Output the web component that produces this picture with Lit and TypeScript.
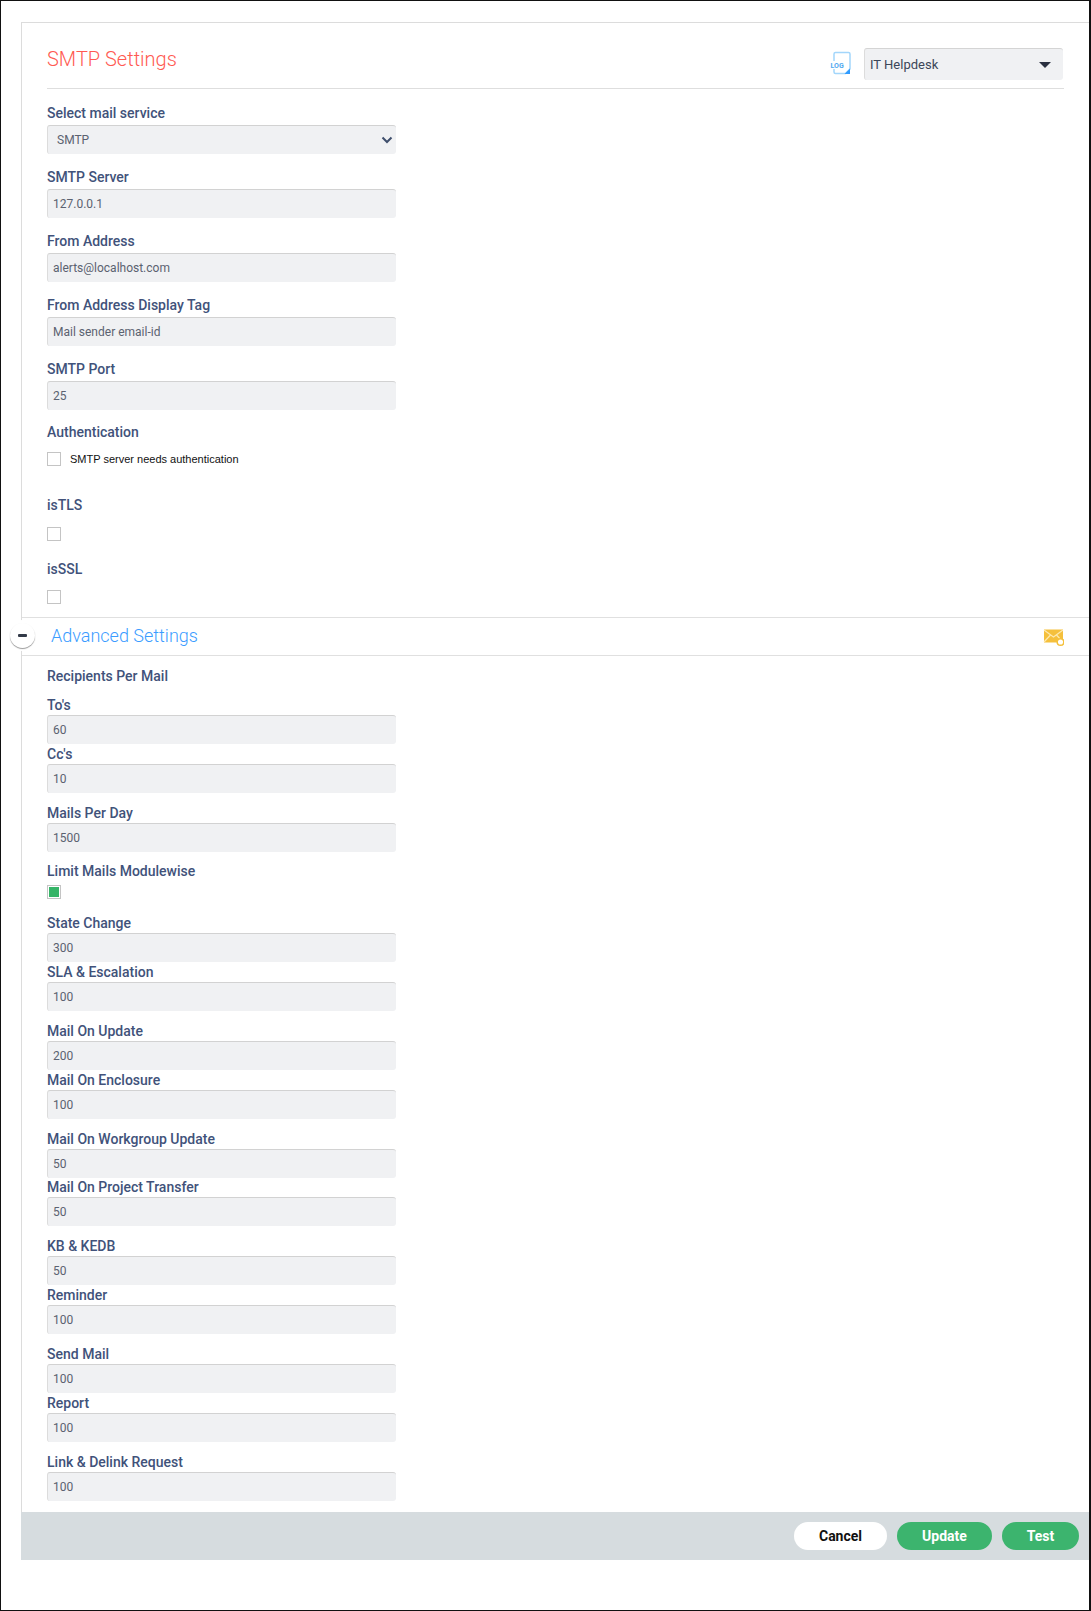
import { LitElement, html, css } from "lit";
import { customElement } from "lit/decorators.js";

type F = { label: string; value: string; cls?: string };

const mainFields: F[] = [
  { label: "SMTP Server", value: "127.0.0.1" },
  { label: "From Address", value: "alerts@localhost.com" },
  { label: "From Address Display Tag", value: "Mail sender email-id" },
  { label: "SMTP Port", value: "25" },
];

const limitGroups: F[][] = [
  [
    { label: "State Change", value: "300" },
    { label: "SLA & Escalation", value: "100" },
  ],
  [
    { label: "Mail On Update", value: "200" },
    { label: "Mail On Enclosure", value: "100" },
  ],
  [
    { label: "Mail On Workgroup Update", value: "50" },
    { label: "Mail On Project Transfer", value: "50", cls: "pull" },
  ],
  [
    { label: "KB & KEDB", value: "50" },
    { label: "Reminder", value: "100" },
  ],
  [
    { label: "Send Mail", value: "100" },
    { label: "Report", value: "100" },
  ],
  [{ label: "Link & Delink Request", value: "100" }],
];

@customElement("app-root")
export class AppRoot extends LitElement {
  static styles = css`
    :host {
      display: block;
      box-sizing: border-box;
      width: 1091px;
      height: 1611px;
      background: #fff;
      border: solid #111;
      border-width: 1px 2px 1px 1px;
      font-family: Roboto, "Liberation Sans", sans-serif;
      overflow: hidden;
    }
    .panel {
      position: relative;
      margin: 21px 0 0 20px;
      border-top: 1px solid #dcdcdc;
      border-left: 1px solid #dcdcdc;
    }
    .head {
      display: flex;
      align-items: center;
      justify-content: space-between;
      margin: 0 25px;
      height: 65px;
      border-bottom: 1px solid #dedede;
    }
    h1 {
      margin: 7px 0 0;
      font-size: 20px;
      font-weight: 300;
      color: #ff5a52;
    }
    .head-right {
      display: flex;
      align-items: center;
      gap: 13px;
      margin: 17px 1px 0 0;
    }
    .log { display: block; width: 24px; height: 26px; }
    .log text {
      font-family: Roboto, sans-serif;
      font-size: 7px;
      font-weight: 700;
      fill: #4fa8f0;
    }
    .dept {
      box-sizing: border-box;
      width: 199px;
      height: 32px;
      display: flex;
      align-items: center;
      justify-content: space-between;
      padding: 0 12px 0 5px;
      background: #f0f1f3;
      border-top: 1px solid #d4d4d4;
      border-left: 1px solid #dcdcdc;
      border-radius: 3px;
      font-size: 13px;
      color: #3c4658;
    }
    .caret {
      width: 0;
      height: 0;
      border-left: 6px solid transparent;
      border-right: 6px solid transparent;
      border-top: 6px solid #2a3040;
    }
    .body { padding: 13px 25px 0; }
    .label {
      height: 20px;
      line-height: 20px;
      font-size: 14px;
      font-weight: 500;
      color: #41527a;
    }
    .stack { display: flex; flex-direction: column; gap: 12px; }
    .stack .label { margin-bottom: 3px; line-height: 22px; }
    .pull { margin-top: -1px; }
    .input {
      box-sizing: border-box;
      width: 349px;
      height: 29px;
      line-height: 28px;
      padding-left: 5px;
      background: #f0f1f3;
      border-top: 1px solid #d2d2d2;
      border-left: 1px solid #dcdcdc;
      border-radius: 3px;
      font-size: 12px;
      color: #5b6270;
    }
    .select {
      display: flex;
      align-items: center;
      justify-content: space-between;
      padding: 0 3px 0 9px;
    }
    .chev { display: block; width: 12px; height: 8px; }
    .box {
      box-sizing: border-box;
      width: 14px;
      height: 14px;
      background: #fff;
      border: 1px solid #c4c4c4;
      padding: 1px;
    }
    .box.on::before {
      content: "";
      display: block;
      width: 10px;
      height: 10px;
      background: #35b467;
    }
    .auth { margin-top: 11px; line-height: 22px; }
    .check-row { display: flex; align-items: center; gap: 9px; margin-top: 11px; }
    .check-text {
      font-family: "Liberation Sans", Arial, sans-serif;
      font-size: 11px;
      color: #111;
    }
    .tls { margin-top: 29px; }
    .tls .box { margin-top: 12px; }
    .ssl { margin-top: 18px; }
    .ssl .box { margin-top: 11px; }
    .adv-wrap { position: relative; margin-top: 13px; }
    .adv-head {
      display: flex;
      align-items: center;
      justify-content: space-between;
      box-sizing: border-box;
      height: 39px;
      padding: 0 25px 0 29px;
      border-top: 1px solid #e0e0e0;
      border-bottom: 1px solid #e0e0e0;
    }
    h2 {
      margin: 0 0 2px;
      font-size: 18px;
      font-weight: 300;
      color: #3b9cff;
    }
    .mail { display: block; width: 22px; height: 20px; }
    .toggle {
      position: absolute;
      left: -12px;
      top: 6px;
      width: 25px;
      height: 25px;
      border-radius: 50%;
      background: #fff;
      box-shadow: 0 1px 1px rgba(0, 0, 0, 0.4), 0 0 0 3px #fff;
      display: flex;
      align-items: center;
      justify-content: center;
    }
    .toggle::before {
      content: "";
      width: 9px;
      height: 3px;
      background: #333a48;
      border-radius: 1px;
    }
    .adv { padding: 10px 25px 11px; }
    .to { margin-top: 9px; }
    .group { margin-top: 10px; }
    .limit { margin-top: 9px; }
    .limit .box { margin-top: 4px; }
    .groups-first { margin-top: 14px; }
    .footer {
      display: flex;
      justify-content: flex-end;
      align-items: center;
      gap: 10px;
      height: 48px;
      margin-left: -1px;
      padding-right: 10px;
      background: #d6dcdf;
    }
    .btn {
      height: 28px;
      line-height: 28px;
      text-align: center;
      border-radius: 14px;
      font-size: 14px;
      font-weight: 700;
      color: #fff;
      background: #3cb46e;
    }
    .cancel { width: 93px; background: #fff; color: #111; }
    .update { width: 95px; }
    .test { width: 77px; }
  `;

  private field(f: F) {
    return html`<div class="field ${f.cls ?? ""}">
      <div class="label">${f.label}</div>
      <div class="input">${f.value}</div>
    </div>`;
  }

  render() {
    return html`
      <div class="panel">
        <div class="head">
          <h1>SMTP Settings</h1>
          <div class="head-right">
            <svg class="log" viewBox="0 0 24 26">
              <path d="M8.500 1.500h13a1.500 1.500 0 0 1 1.500 1.500v15l-4.500 4.500H8.500A1.500 1.500 0 0 1 7 21V3a1.500 1.500 0 0 1 1.500-1.500z" fill="#fff" stroke="#a3d6fb" stroke-width="1.500"/>
              <path d="M23 17.500v5.500h-5.500z" fill="#2f9bff"/>
              <rect x="3" y="10" width="15" height="8" fill="#fff"/>
              <text x="3.500" y="16.500">LOG</text>
            </svg>
            <div class="dept"><span>IT Helpdesk</span><span class="caret"></span></div>
          </div>
        </div>
        <div class="body">
          <div class="stack">
            <div class="field">
              <div class="label">Select mail service</div>
              <div class="input select">
                <span>SMTP</span>
                <svg class="chev" viewBox="0 0 12 8"><path d="M1.500 1.500 6 6l4.500-4.500" fill="none" stroke="#3f4f6c" stroke-width="2"/></svg>
              </div>
            </div>
            ${mainFields.map((f) => this.field(f))}
          </div>
          <div class="label auth">Authentication</div>
          <div class="check-row">
            <div class="box"></div>
            <span class="check-text">SMTP server needs authentication</span>
          </div>
          <div class="tls">
            <div class="label">isTLS</div>
            <div class="box"></div>
          </div>
          <div class="ssl">
            <div class="label">isSSL</div>
            <div class="box"></div>
          </div>
        </div>
        <div class="adv-wrap">
          <div class="adv-head">
            <h2>Advanced Settings</h2>
            <svg class="mail" viewBox="0 0 22 20">
              <path d="M2 2.500h19v13H2z" fill="#f5c03c"/>
              <path d="M2 3 11.500 10 21 3M2 15l6.500-7M21 15l-6.500-7" fill="none" stroke="#fde9b0" stroke-width="1.200"/>
              <circle cx="18.500" cy="15" r="3.300" fill="#fff" stroke="#f5c03c" stroke-width="1.500"/>
            </svg>
          </div>
          <div class="toggle"></div>
        </div>
        <div class="adv">
          <div class="label">Recipients Per Mail</div>
          <div class="to">
            ${this.field({ label: "To's", value: "60" })}
            ${this.field({ label: "Cc's", value: "10" })}
          </div>
          <div class="group">${this.field({ label: "Mails Per Day", value: "1500" })}</div>
          <div class="limit">
            <div class="label">Limit Mails Modulewise</div>
            <div class="box on"></div>
          </div>
          ${limitGroups.map(
            (g, i) => html`<div class=${i === 0 ? "groups-first" : "group"}>
              ${g.map((f) => this.field(f))}
            </div>`
          )}
        </div>
        <div class="footer">
          <div class="btn cancel">Cancel</div>
          <div class="btn update">Update</div>
          <div class="btn test">Test</div>
        </div>
      </div>
    `;
  }
}
